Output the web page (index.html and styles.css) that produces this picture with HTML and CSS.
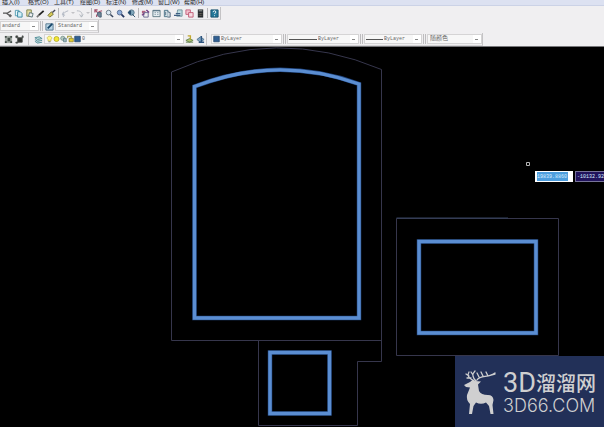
FILE: index.html
```html
<!DOCTYPE html>
<html lang="zh-CN">
<head>
<meta charset="utf-8">
<title>CAD</title>
<link rel="stylesheet" href="styles.css">
</head>
<body>
<svg class="defs" aria-hidden="true">
  <symbol id="cut" viewBox="0 0 10 10"><path d="M0 4.500h5L9 2M4 5l5 3" stroke="#555" stroke-width="1.300" fill="none"/><circle cx="8" cy="7.500" r="1.200" fill="none" stroke="#555"/></symbol>
  <symbol id="copy" viewBox="0 0 10 10"><path d="M1.500 1.500h4v6h-4z" fill="#e9f6fa" stroke="#4d9bb1"/><path d="M4 3h3l2 2v4H4z" fill="#d3eff6" stroke="#3586a2"/></symbol>
  <symbol id="paste" viewBox="0 0 10 10"><path d="M2 1h5v7H2z" fill="#e5dea3" stroke="#7c8148"/><path d="M5 4l4 1-1 4-4-1z" fill="#eee" stroke="#557077"/></symbol>
  <symbol id="pencil" viewBox="0 0 10 10"><path d="M1 9l3-3" stroke="#777" stroke-width="2"/><path d="M3.500 6.500L8.500 2" stroke="#242424" stroke-width="2"/></symbol>
  <symbol id="brush" viewBox="0 0 10 10"><path d="M1 7l4-4 2 3-4 3z" fill="#d7c956" stroke="#716e34"/><path d="M6 4l3-3" stroke="#445" stroke-width="1.500"/></symbol>
  <symbol id="undo" viewBox="0 0 10 10"><path d="M3 9C1 6 4 3 8 2M3 3L1.500 6l3 1" stroke="#aab1bd" fill="none"/></symbol>
  <symbol id="redo" viewBox="0 0 10 10"><path d="M1 2c5 0 7 3 5 7M4 6l2 3 2-3" stroke="#b0b5bd" fill="none"/></symbol>
  <symbol id="pan" viewBox="0 0 10 10"><path d="M1 1l3 3M1 4V1h3M5 3l4-1M3 6v3" stroke="#a24e68" fill="none" stroke-width="1.300"/><path d="M4 4h4v5H6L4 7z" fill="#718796" stroke="#435a70"/></symbol>
  <symbol id="zoom" viewBox="0 0 10 10"><circle cx="4" cy="4" r="2.600" fill="#dce9f4" stroke="#62717f"/><path d="M6 6l3 3" stroke="#36455c" stroke-width="1.600"/></symbol>
  <symbol id="zoomwin" viewBox="0 0 10 10"><circle cx="4" cy="4" r="2.600" fill="#8dacd8" stroke="#536a91"/><path d="M6 6l3 3" stroke="#24365f" stroke-width="2"/></symbol>
  <symbol id="zoomprev" viewBox="0 0 10 10"><circle cx="5" cy="4" r="3" fill="#81a7bc" stroke="#547488"/><path d="M1 4l3-2v4zM6 6l3 3" fill="#244775" stroke="#244a67"/></symbol>
  <symbol id="props" viewBox="0 0 10 10"><path d="M1 2h4v3H1z" fill="#b26180"/><path d="M3 4h5v5H3z" fill="#eee" stroke="#67668f"/><path d="M6 1l3 3M1 7l3-2" stroke="#703c80" stroke-width="1.500"/></symbol>
  <symbol id="grid" viewBox="0 0 10 10"><path d="M1 1.500h8v7H1z" fill="#e5edf0" stroke="#5b7882"/><path d="M1 2h8M3 4h1M6 4h1M3 6h1M6 6h1" stroke="#506c80"/></symbol>
  <symbol id="palette" viewBox="0 0 10 10"><path d="M1.500 1.500h4v7h-4z" fill="#dce9ee" stroke="#456f83"/><path d="M5 3l3 1v5H5M3 3v4" fill="#d0d9df" stroke="#4f687d"/></symbol>
  <symbol id="sheets" viewBox="0 0 10 10"><path d="M4 1h5v7H3z" fill="#bedbe1" stroke="#6f929a"/><path d="M0 7h7M2 5h5" stroke="#405e82" stroke-width="1.300"/></symbol>
  <symbol id="markup" viewBox="0 0 10 10"><path d="M1 1h5v5H1z" fill="#f3c2ce" stroke="#c35d79"/><path d="M4 4h5v5H4z" fill="#f8dce3" stroke="#bf5973"/></symbol>
  <symbol id="calc" viewBox="0 0 10 10"><path d="M2 .500h6v9H2z" fill="#262a2d"/><path d="M3 2h4" stroke="#a8aea8"/><path d="M3 5h4M3 7h4" stroke="#776e63" stroke-dasharray="1 .500"/></symbol>
  <symbol id="help" viewBox="0 0 10 10"><path d="M1 1h8v8H1z" fill="#247899" stroke="#17506d"/><path d="M3.500 3.500c0-2 3-2 3 0 0 1-1.500 1-1.500 2M5 7v1" stroke="#fff" fill="none"/></symbol>
  <symbol id="style" viewBox="0 0 10 10"><path d="M1 2h8v7H1z" fill="#bad5e5" stroke="#53758c"/><path d="M3 7l5-5" stroke="#174569" stroke-width="2"/></symbol>
  <symbol id="hatch" viewBox="0 0 10 10"><path d="M1 1h8v8H1z" fill="#a3aaa5"/><path d="M1 1h2v2H1zM7 1h2v2H7zM1 7h2v2H1zM7 7h2v2H7zM4 3h3v4H4z" fill="#414b47"/></symbol>
  <symbol id="block" viewBox="0 0 10 10"><path d="M1 1h2v2H1zM8 1h1v2H8zM1 8h2v1H1zM3 3h5v5H3z" fill="#303331" stroke="#4c504e"/></symbol>
  <symbol id="layers" viewBox="0 0 10 10"><path d="M1 3l5-1 3 2-5 1zM1 5l3 2 5-1M1 7l3 2 5-1" fill="#b9d9d9" stroke="#4c8894"/></symbol>
  <symbol id="bulb" viewBox="0 0 10 10"><path d="M3 6C0 3 3 1 5 1s5 2 2 5v2H3z" fill="#fff78f" stroke="#c2b446"/><path d="M3.500 9h3" stroke="#5b646b"/></symbol>
  <symbol id="sun" viewBox="0 0 10 10"><circle cx="5" cy="5" r="3.600" fill="#f3e733" stroke="#a69d26"/></symbol>
  <symbol id="freeze" viewBox="0 0 10 10"><circle cx="4" cy="4" r="3" fill="#b8cbbf" stroke="#66847e"/><path d="M5 4h4v5H5z" fill="#9db7bd" stroke="#587982"/></symbol>
  <symbol id="lock" viewBox="0 0 10 10"><path d="M1 4V1h5v3" fill="none" stroke="#a89b32" stroke-width="1.500"/><path d="M3 4h6v5H3z" fill="#e3ce32" stroke="#81772a"/></symbol>
  <symbol id="swatch" viewBox="0 0 10 10"><path d="M1 1h8v8H1z" fill="#315f92" stroke="#234568"/></symbol>
  <symbol id="layerprev" viewBox="0 0 10 10"><path d="M1 6l4-2 4 2-4 2zM1 8h8" fill="#afc46f" stroke="#65824f"/><path d="M3 1h3v4" fill="none" stroke="#c1a831" stroke-width="1.500"/></symbol>
  <symbol id="layerstate" viewBox="0 0 10 10"><path d="M1 5l4-3 4 3-4 3z" fill="#86a9c6" stroke="#4e748f"/><path d="M6 1v7M3 8h6" stroke="#2e547e" stroke-width="1.500"/></symbol>
</svg>

<nav class="menu">
  <a href="#">插入(I)</a><a href="#">格式(O)</a><a href="#">工具(T)</a><a href="#">绘图(D)</a><a href="#">标注(N)</a><a href="#">修改(M)</a><a href="#">窗口(W)</a><a href="#">帮助(H)</a>
</nav>

<header class="toolbars">
  <div class="bar standard">
    <button aria-label="剪切"><svg><use href="#cut"/></svg></button>
    <button aria-label="复制"><svg><use href="#copy"/></svg></button>
    <button aria-label="粘贴"><svg><use href="#paste"/></svg></button>
    <button aria-label="特性匹配"><svg><use href="#pencil"/></svg></button>
    <button aria-label="块编辑器"><svg><use href="#brush"/></svg></button>
    <i class="rule"></i>
    <button aria-label="放弃"><svg><use href="#undo"/></svg></button>
    <i class="caret"></i>
    <button aria-label="重做"><svg><use href="#redo"/></svg></button>
    <i class="caret"></i>
    <i class="rule"></i>
    <button aria-label="平移"><svg><use href="#pan"/></svg></button>
    <button aria-label="实时缩放"><svg><use href="#zoom"/></svg></button>
    <button aria-label="窗口缩放"><svg><use href="#zoomwin"/></svg></button>
    <button aria-label="缩放上一个"><svg><use href="#zoomprev"/></svg></button>
    <i class="rule"></i>
    <button aria-label="特性"><svg><use href="#props"/></svg></button>
    <button aria-label="设计中心"><svg><use href="#grid"/></svg></button>
    <button aria-label="工具选项板"><svg><use href="#palette"/></svg></button>
    <button aria-label="图纸集"><svg><use href="#sheets"/></svg></button>
    <button aria-label="标记集"><svg><use href="#markup"/></svg></button>
    <button aria-label="计算器"><svg><use href="#calc"/></svg></button>
    <i class="rule"></i>
    <button aria-label="帮助"><svg><use href="#help"/></svg></button>
  </div>

  <div class="bar styles">
    <div class="combo text-style"><select aria-label="文字样式"><option>andard</option></select></div>
    <i class="grip"></i>
    <button aria-label="样式"><svg><use href="#style"/></svg></button>
    <div class="combo table-style"><select aria-label="表格样式"><option>Standard</option></select></div>
  </div>

  <div class="row">
    <div class="bar draw">
      <button aria-label="图案"><svg><use href="#hatch"/></svg></button>
      <button aria-label="块"><svg><use href="#block"/></svg></button>
    </div>
    <div class="bar layer-bar">
      <button aria-label="图层"><svg><use href="#layers"/></svg></button>
      <div class="combo layer">
        <svg><use href="#bulb"/></svg><svg><use href="#sun"/></svg><svg><use href="#freeze"/></svg><svg><use href="#lock"/></svg><svg><use href="#swatch"/></svg>
        <select aria-label="当前图层"><option>0</option></select>
      </div>
      <button aria-label="上一个图层"><svg><use href="#layerprev"/></svg></button>
      <button aria-label="图层状态"><svg><use href="#layerstate"/></svg></button>
    </div>
    <div class="bar properties">
      <div class="combo color"><svg><use href="#swatch"/></svg><select aria-label="颜色"><option>ByLayer</option></select></div>
      <i class="grip"></i>
      <div class="combo linetype"><i class="line"></i><select aria-label="线型"><option>ByLayer</option></select></div>
      <i class="grip"></i>
      <div class="combo weight"><i class="line"></i><select aria-label="线宽"><option>ByLayer</option></select></div>
      <i class="grip"></i>
      <div class="combo plot"><select aria-label="打印样式"><option>随颜色</option></select></div>
    </div>
  </div>
</header>

<main class="canvas">
  <svg class="drawing" viewBox="0 47 604 380" preserveAspectRatio="xMinYMin slice" fill="none">
    <g stroke="#36364c">
      <path d="M171.500 340.500V72Q276 25 381.500 69.500V361.500H357.500V425.500H258.500V340.500M171.500 340.500H381.500"/>
      <path d="M396.500 218.500H558.500V355.500H396.500z"/>
      <path d="M396.500 218H508" stroke="#34435e"/>
    </g>
    <g stroke="#21457d" stroke-width="4.500">
      <path d="M194.500 318V86.500Q277 54.500 359 84V318z"/>
      <path d="M270 352.500h59.500v61H270zM419 241.500h117v91.500H419z"/>
    </g>
    <g stroke="#5b8ed2" stroke-width="3.400">
      <path d="M194.500 318V86.500Q277 54.500 359 84V318z"/>
      <path d="M270 352.500h59.500v61H270zM419 241.500h117v91.500H419z"/>
    </g>
    <path d="M526.500 162.500h3v3h-3z" stroke="#b4b4b4"/>
  </svg>
  <div class="coords">
    <input class="x" aria-label="X" value="19839.8860">
    <input class="y" aria-label="Y" value="-10132.920">
  </div>
  <aside class="brand">
    <svg class="deer" viewBox="0 0 34 46" aria-hidden="true">
      <path fill="#cfcfd0" d="M0 16L6 13 9 10.500 11 12 17 12.500 14 15.500 15 22Q17 26 24 26Q29 26 29.500 31L28.500 36 29.500 45H26.500L25 37 22 33.500Q17 36 12 33.500L9.500 37 8 45H5L6 35Q2 31 3 26L6 18.500 2 18z"/>
      <path fill="none" stroke="#cfcfd0" stroke-width="1.300" stroke-linecap="round" d="M10 12C4 9 3 6 5 3M5 7L2 5M7 9L3 9M12 12C8 8 8 5 11 2M9 6L7 3M13 11C16 6 25 9 31 4M15 8L13 4M19 7L17 3M24 7L22 3M27 6l4-1"/>
    </svg>
    <div class="words">
      <div class="name"><span>3D</span><b>溜溜网</b></div>
      <div class="site">3D66.COM</div>
    </div>
  </aside>
</main>
</body>
</html>
```
FILE: styles.css
```css
* { box-sizing: border-box; }

body {
  margin: 0;
  height: 100vh;
  display: flex;
  flex-direction: column;
  overflow: hidden;
  background: #000;
  font-family: "Liberation Sans", "Noto Sans CJK SC", sans-serif;
}

.defs { display: none; }

.menu {
  display: flex;
  align-items: flex-end;
  height: 6px;
  overflow: hidden;
  background: #dce1f1;
  border-bottom: 1px solid #cbd2e6;
  padding-left: 2px;
}

.menu a {
  flex: 0 0 26px;
  color: #222;
  font-size: 6px;
  line-height: 6px;
  text-decoration: none;
  white-space: nowrap;
}

.toolbars {
  background: #f0eff1;
  padding-top: 1px;
  border-bottom: 1px solid #77777a;
}

.row { display: flex; }

.bar {
  display: flex;
  align-items: center;
  width: fit-content;
  height: 13px;
  border-right: 1px solid #c4c3c5;
  border-bottom: 1px solid #d3d2d4;
}

.standard { padding-left: 2px; }

button {
  display: flex;
  align-items: center;
  justify-content: center;
  flex: none;
  width: 11px;
  height: 11px;
  padding: 0;
  border: 0;
  background: none;
}

button svg { width: 9px; height: 9px; }

.rule {
  width: 1px;
  height: 10px;
  margin: 0 1px;
  background: #b5b4b6;
}

.grip {
  width: 3px;
  height: 10px;
  margin: 0 1px;
  border: solid #bdbcbe;
  border-width: 0 1px;
}

.caret {
  width: 4px;
  height: 2px;
  background: #c2c2c6;
  clip-path: polygon(0 0, 100% 0, 50% 100%);
}

.combo {
  display: flex;
  align-items: center;
  height: 10px;
  padding-left: 1px;
  background: #f7f7f7;
  border: 1px solid #d5d4d5;
}

.combo svg { flex: none; width: 7px; height: 8px; }

select {
  appearance: none;
  flex: 1;
  min-width: 0;
  height: 8px;
  padding: 0 0 0 1px;
  border: 0;
  color: #666;
  background: linear-gradient(#888, #888) right 3px center / 3px 1px no-repeat, linear-gradient(#fff, #fff) right / 8px 8px no-repeat;
  font: 5px/8px "Liberation Mono", "Noto Sans CJK SC", monospace;
}

.line { flex: none; height: 1px; background: #555; }

.text-style { width: 39px; }
.text-style select { padding: 0; }
.table-style { width: 43px; }

.draw { padding: 0 3px; }
.layer-bar { padding: 0 0 0 4px; }
.layer { width: 140px; }
.properties { padding-left: 4px; }
.color { width: 71px; }
.linetype { width: 72px; }
.linetype .line { width: 28px; }
.weight { width: 58px; }
.weight .line { width: 17px; }
.plot { width: 55px; }
.plot select { font-size: 6px; }

.canvas {
  position: relative;
  flex: 1;
  min-height: 0;
  overflow: hidden;
}

.drawing { display: block; width: 100%; height: 100%; }

.coords {
  position: absolute;
  left: 535px;
  top: 124px;
  display: flex;
  gap: 2px;
}

.coords input {
  width: 38px;
  height: 11px;
  padding: 0;
  border: 1px solid #fff;
  border-radius: 0;
  color: #d6edff;
  font: 5px/8px "Liberation Mono", monospace;
}

.coords .x { background: #4d9ddd; border-width: 1px 5px 1px 2px; }
.coords .y { background: #21135c; border-color: #777399; padding-left: 1px; }

.brand {
  position: absolute;
  right: 0;
  bottom: 0;
  display: flex;
  align-items: center;
  gap: 5px;
  padding: 13px 8px 12px 9px;
  background: #223058;
  color: #cfcfd0;
}

.deer { width: 34px; height: 46px; }

.name {
  display: flex;
  align-items: center;
  height: 28px;
  white-space: nowrap;
}

.name span { font: 27px/28px Roboto, sans-serif; }
.name b { font: 500 20px/28px "Noto Sans CJK SC", sans-serif; }
.site { font: 300 18px/18px Inter, sans-serif; }
```
